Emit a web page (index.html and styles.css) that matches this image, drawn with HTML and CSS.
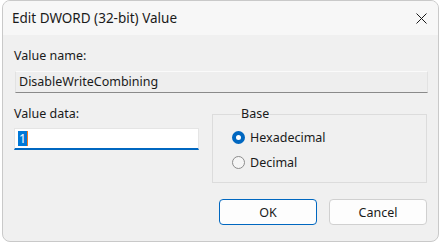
FILE: index.html
```html
<!DOCTYPE html>
<html lang="en">

<head>
  <meta charset="UTF-8">
  <meta name="viewport" content="width=device-width, initial-scale=1.0">
  <title>Edit DWORD (32-bit) Value</title>

  <link rel="stylesheet" href="styles.css">
</head>

<body>
  <div class="window">
    <div class="titlebar">
      <span class="title">Edit DWORD (32-bit) Value</span>
      <span class="close">
        <svg width="11" height="11" viewBox="0 0 11 11">
          <path d="M0.5 0.5 L10.5 10.5 M10.5 0.5 L0.5 10.5" stroke="#1a1a1a" stroke-width="1" fill="none" />
        </svg>
      </span>
    </div>

    <div class="content">
      <div class="label">Value name:</div>
      <div class="field name-field">DisableWriteCombining</div>

      <div class="row">
        <div class="data-col">
          <div class="label">Value data:</div>
          <div class="field data-field"><span class="selected">1</span><span class="caret"></span></div>
        </div>

        <fieldset class="base">
          <legend>Base</legend>
          <div class="radio">
            <span class="dot checked"></span>
            <span>Hexadecimal</span>
          </div>
          <div class="radio">
            <span class="dot"></span>
            <span>Decimal</span>
          </div>
        </fieldset>
      </div>

      <div class="buttons">
        <button class="btn default">OK</button>
        <button class="btn">Cancel</button>
      </div>
    </div>
  </div>
</body>

</html>
```

FILE: styles.css
```css
body {
  background: #ffffff;
  font-family: "Noto Sans", "DejaVu Sans", sans-serif;
  font-size: 12.5px;
  margin: 0;
}

.window {
  background: #f0f0f0;
  border: 1px solid #c9c9c9;
  border-radius: 8px;
  box-sizing: border-box;
  color: #1a1a1a;
  height: 242px;
  margin-left: 2px;
  overflow: hidden;
  width: 437px;
}

.titlebar {
  align-items: center;
  background: #f7f7f7;
  display: flex;
  height: 34px;
  justify-content: space-between;
  padding: 0 12px 0 9px;
}

.title {
  color: #1a1a1a;
  font-size: 13.5px;
  margin-top: -1px;
}

.close {
  display: flex;
  margin-right: -1px;
}

.content {
  padding: 13px 11px 0 11px;
}

.label {
  height: 16px;
  line-height: 16px;
}

.field {
  box-sizing: border-box;
  height: 22px;
  line-height: 20px;
  padding-left: 3px;
}

.name-field {
  background: #eeeeee;
  border: 1px solid #e2e2e2;
  border-bottom-color: #8a8a8a;
  border-top-color: #fafafa;
  margin: 7px 0 0 1px;
  width: 413px;
}

.row {
  display: flex;
  margin-top: 13px;
}

.data-col {
  width: 198px;
}

.data-field {
  background: #ffffff;
  border: 1px solid #e5e5e5;
  border-bottom: 2px solid #0067c0;
  display: flex;
  align-items: center;
  margin-top: 6px;
  width: 185px;
}

.selected {
  background: #0078d7;
  color: #ffffff;
  height: 15px;
  line-height: 15px;
  padding: 0 1px;
}

.caret {
  background: #f07820;
  height: 15px;
  width: 1px;
}

.base {
  border: 1px solid #dcdcdc;
  box-sizing: border-box;
  height: 76px;
  margin: 1px 0 0 1px;
  padding: 4px 0 0 19px;
  width: 216px;
}

.base legend {
  line-height: 14px;
  padding: 0 1px;
  margin-left: 8px;
}

.radio {
  align-items: center;
  display: flex;
  gap: 5px;
  height: 25px;
}

.dot {
  background: #f5f5f5;
  border: 1px solid #8c8c8c;
  border-radius: 50%;
  box-sizing: border-box;
  height: 13px;
  width: 13px;
}

.dot.checked {
  background: #ffffff;
  border: 4px solid #0067c0;
}

.buttons {
  display: flex;
  gap: 12px;
  justify-content: flex-end;
  margin-top: 16px;
}

.btn {
  background: #fdfdfd;
  border: 1px solid #d0d0d0;
  border-radius: 4px;
  color: #1a1a1a;
  font-family: inherit;
  font-size: 12.5px;
  height: 26px;
  width: 98px;
}

.btn.default {
  border-color: #0067c0;
}
```
